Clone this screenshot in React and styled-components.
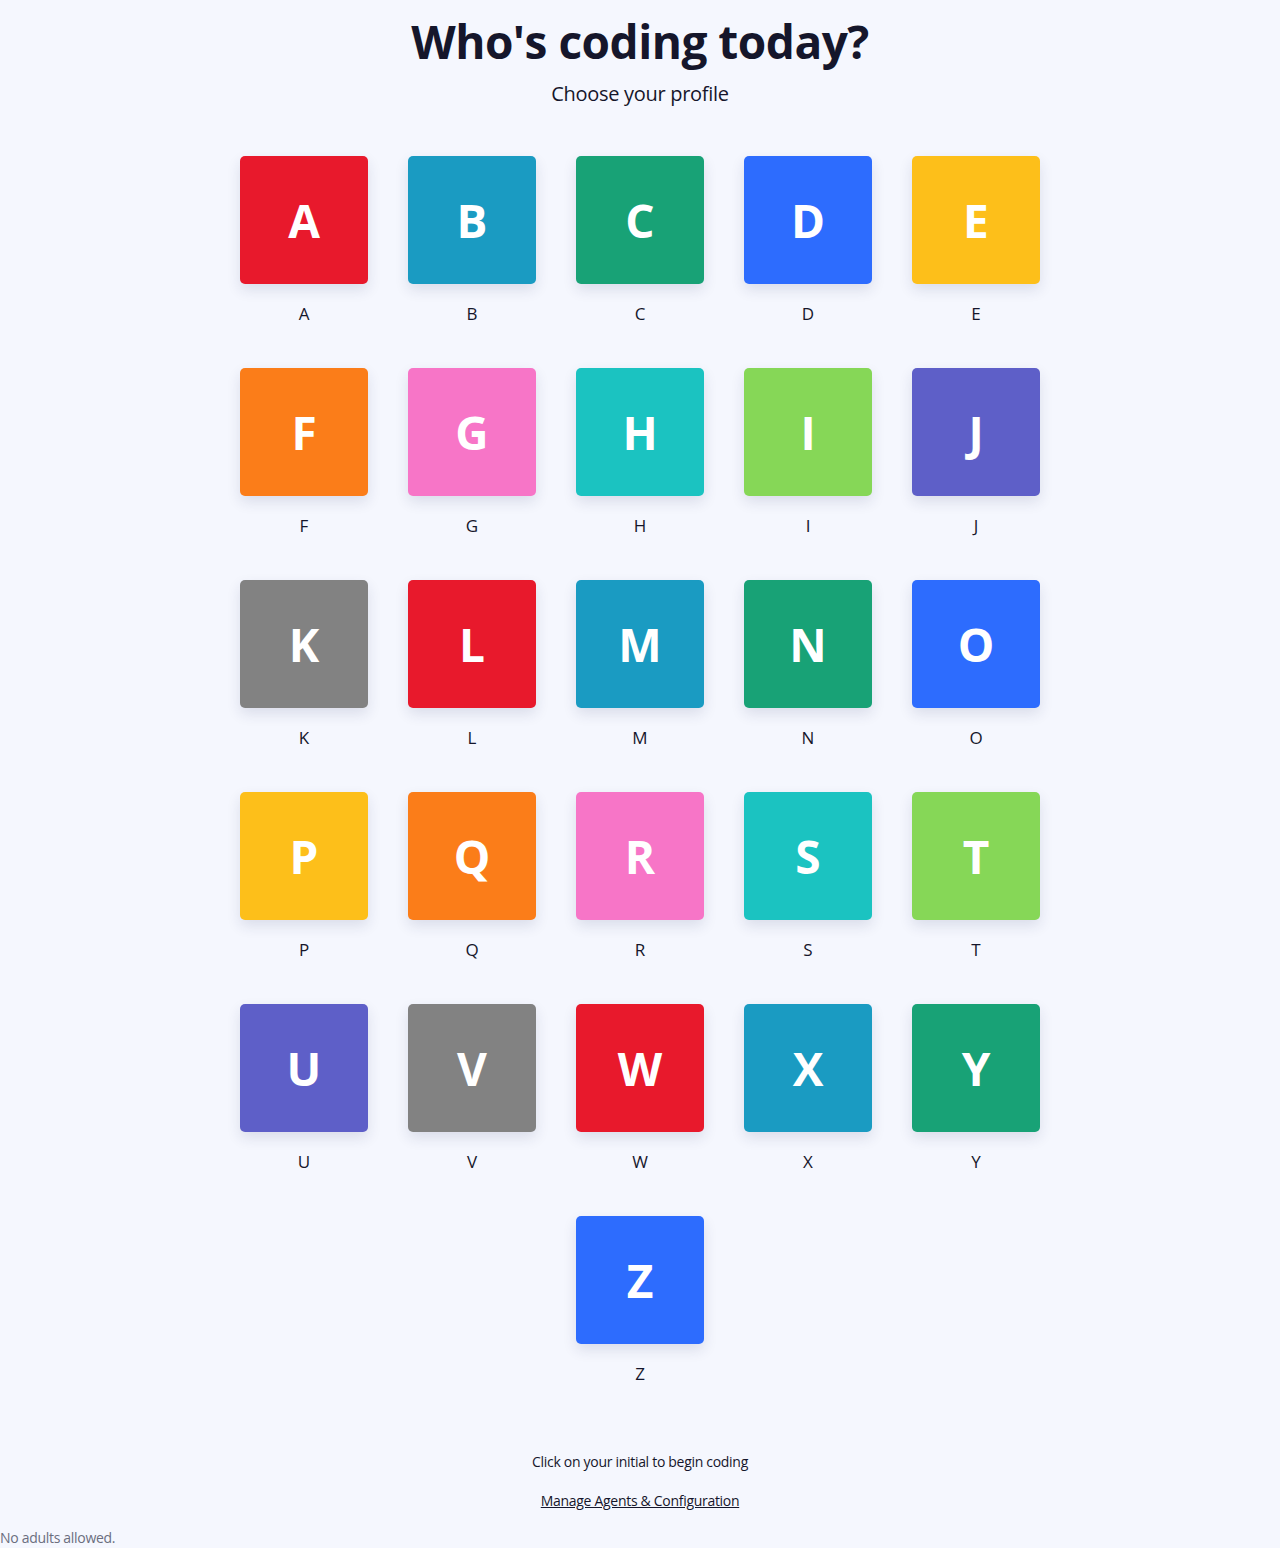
import React from "react";
import styled, { createGlobalStyle } from "styled-components";

const GlobalStyle = createGlobalStyle`
  html, body {
    margin: 0;
    padding: 0;
    background: #f5f7fe;
    font-family: "Open Sans", "Noto Sans", sans-serif;
    color: #15162b;
  }
`;

const palette = [
  "#e8192c",
  "#1a9bc2",
  "#18a276",
  "#2d6cfe",
  "#fdbf1a",
  "#fb7d19",
  "#f775c7",
  "#1bc3c1",
  "#86d757",
  "#5e5fc8",
  "#828282",
];

const letters = "ABCDEFGHIJKLMNOPQRSTUVWXYZ".split("");

const Page = styled.div`
  min-height: 1548px;
  display: flex;
  flex-direction: column;
`;

const Main = styled.main`
  display: flex;
  flex-direction: column;
  align-items: center;
  padding-top: 13px;
`;

const Title = styled.h1`
  margin: 0;
  font-size: 46px;
  line-height: 56px;
  font-weight: 700;
  letter-spacing: -0.5px;
  color: #15162b;
`;

const Subtitle = styled.p`
  margin: 11px 0 0;
  font-size: 20px;
  line-height: 28px;
  letter-spacing: -0.3px;
  color: #15162b;
`;

const Grid = styled.div`
  width: 800px;
  margin-top: 48px;
  display: flex;
  flex-wrap: wrap;
  justify-content: center;
  column-gap: 40px;
  row-gap: 42px;
`;

const Profile = styled.button`
  width: 128px;
  padding: 0;
  border: none;
  background: none;
  display: flex;
  flex-direction: column;
  align-items: center;
  cursor: pointer;
  font-family: inherit;
`;

const Tile = styled.div`
  width: 128px;
  height: 128px;
  border-radius: 5px;
  background: ${(p) => p.$color};
  display: flex;
  align-items: center;
  justify-content: center;
  color: #fff;
  font-size: 46px;
  font-weight: 700;
  box-shadow: 0 6px 14px rgba(30, 40, 90, 0.12);
`;

const Name = styled.span`
  margin-top: 18px;
  font-size: 17px;
  line-height: 24px;
  font-weight: 500;
  color: #15162b;
`;

const Footer = styled.footer`
  margin-top: 66px;
  display: flex;
  flex-direction: column;
  align-items: center;
  gap: 19px;
  font-size: 14px;
  line-height: 20px;
  letter-spacing: -0.3px;
`;

const Hint = styled.p`
  margin: 0;
  color: #15162b;
`;

const ManageLink = styled.a`
  color: #15162b;
  text-decoration: underline;
  cursor: pointer;
`;

const Note = styled.div`
  margin-top: 17px;
  font-size: 14px;
  line-height: 20px;
  letter-spacing: -0.3px;
  color: #6b6e7e;
`;

export default function App() {
  return (
    <>
      <GlobalStyle />
      <Page>
        <Main>
          <Title>Who's coding today?</Title>
          <Subtitle>Choose your profile</Subtitle>
          <Grid>
            {letters.map((l, i) => (
              <Profile key={l}>
                <Tile $color={palette[i % palette.length]}>{l}</Tile>
                <Name>{l}</Name>
              </Profile>
            ))}
          </Grid>
          <Footer>
            <Hint>Click on your initial to begin coding</Hint>
            <ManageLink>Manage Agents &amp; Configuration</ManageLink>
          </Footer>
        </Main>
        <Note>No adults allowed.</Note>
      </Page>
    </>
  );
}
